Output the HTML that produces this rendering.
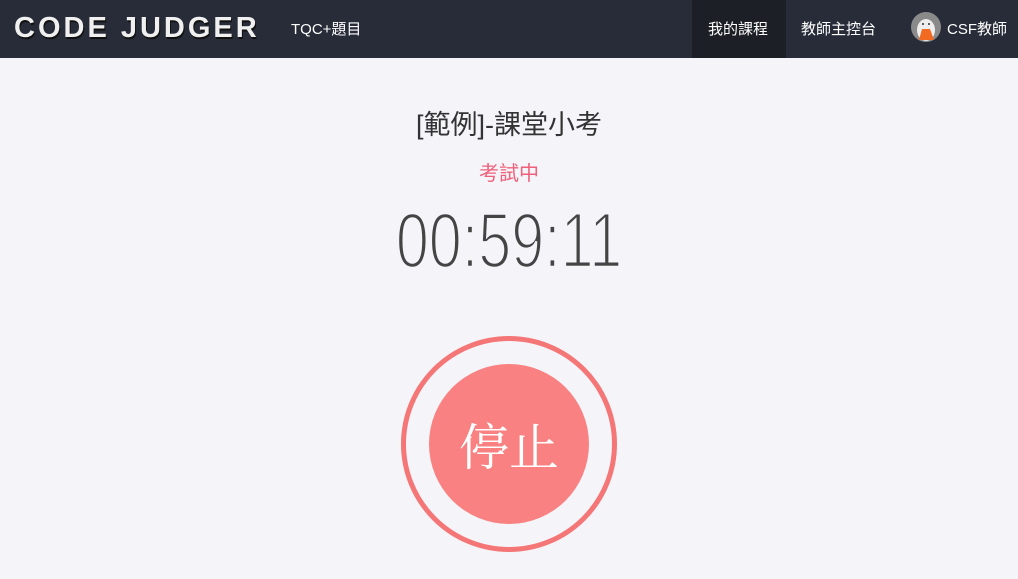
<!DOCTYPE html>
<html><head><meta charset="utf-8"><style>
body{margin:0;width:1018px;height:579px;background:#f4f4f9;font-family:"Liberation Sans","Noto Sans CJK TC",sans-serif;overflow:hidden;position:relative}
.nav{position:absolute;left:0;top:0;width:1018px;height:58px;background:#272c38;color:#fff}
.logo{position:absolute;left:14px;top:12px;font-size:29px;font-weight:bold;letter-spacing:3px;color:#f0f0f0;text-shadow:1px 2px 0 #111}
.a{position:absolute;top:18px;font-size:15px;color:#fff}
.act{position:absolute;left:692px;top:0;width:94px;height:58px;background:#1c1f26}
.av{position:absolute;left:911px;top:12px;width:30px;height:30px;border-radius:50%;background:#8a8a8a;overflow:hidden}
.c{position:absolute;left:0;width:1018px;text-align:center}
</style></head><body>
<div class="nav">
<div class="logo">CODE JUDGER</div>
<div class="a" style="left:291px">TQC+題目</div>
<div class="act"></div>
<div class="a" style="left:708px">我的課程</div>
<div class="a" style="left:801px">教師主控台</div>
<div class="av"><svg width="30" height="30"><ellipse cx="15" cy="18" rx="9" ry="11" fill="#eee"/><path d="M8 28 L11 17 L19 17 L23 28Z" fill="#f26a22"/><circle cx="12" cy="12" r="1" fill="#333"/><circle cx="18" cy="12" r="1" fill="#333"/></svg></div>
<div class="a" style="left:947px">CSF教師</div>
</div>
<div class="c" style="top:103px;font-size:27px;color:#333">[範例]-課堂小考</div>
<div class="c" style="top:157px;font-size:20px;color:#f0607a">考試中</div>
<div class="c" style="top:201px;font-size:78px;color:#444;transform:scaleX(0.76);line-height:78px;-webkit-text-stroke:2.6px #f4f4f9">00:59:11</div>
<div style="position:absolute;left:401px;top:336px;width:206px;height:206px;border:5px solid #f57676;border-radius:50%"></div>
<div style="position:absolute;left:429px;top:364px;width:160px;height:160px;background:#f98181;border-radius:50%;color:#fff;font-family:'Noto Serif CJK SC',serif;font-size:50px;line-height:160px;text-align:center">停止</div>
</body></html>
